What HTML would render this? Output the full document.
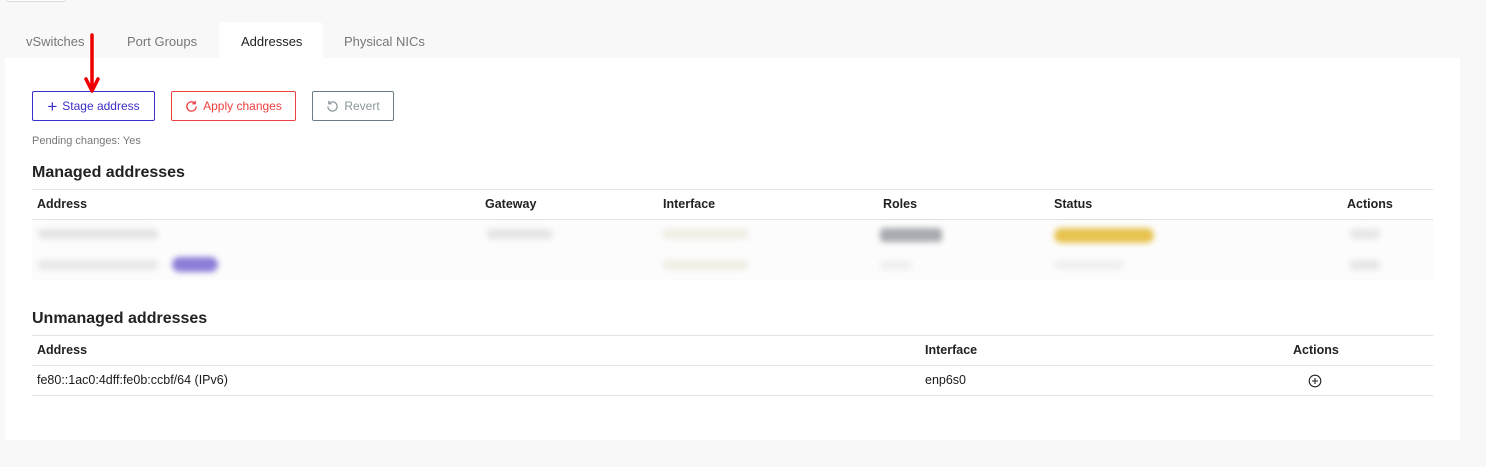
<!DOCTYPE html>
<html><head><style>
*{margin:0;padding:0;box-sizing:border-box}
body{width:1486px;height:467px;background:#f8f8f8;font-family:"Liberation Sans",sans-serif;position:relative;overflow:hidden;color:#1a1a1a}
.a{position:absolute;white-space:nowrap}
.tab{font-size:13px;color:#777;top:34px}
.card{left:5px;top:58px;width:1455px;height:382px;background:#fff}
.btn{height:30px;top:91px;border:1px solid;border-radius:2px;font-size:12px;display:flex;align-items:center;justify-content:center;gap:5px;background:#fff}
.h{font-size:16px;font-weight:bold;color:#222}
.th{font-size:12.5px;font-weight:bold;color:#222}
.line{height:1px;background:#e2e2e2}
.blur{filter:blur(3px);border-radius:4px}
</style></head><body>
<div class="a" style="left:6px;top:-4px;width:60px;height:6px;border:1px solid #ddd;border-radius:4px;background:#fff"></div>
<div class="a" style="left:219px;top:22px;width:104px;height:40px;background:#fff;border-radius:4px 4px 0 0"></div>
<div class="a tab" style="left:26px">vSwitches</div>
<div class="a tab" style="left:127px">Port Groups</div>
<div class="a tab" style="left:241px;color:#222">Addresses</div>
<div class="a tab" style="left:344px">Physical NICs</div>
<div class="a card"></div>

<div class="a btn" style="left:32px;width:123px;border-color:#3b2fc9;color:#3b2fc9"><span style="font-size:17px;line-height:1">+</span>Stage address</div>
<div class="a btn" style="left:171px;width:125px;border-color:#ef4040;color:#ef4040"><svg width="13" height="13" viewBox="0 0 14 14" fill="none" stroke="#ef4040" stroke-width="1.4"><path d="M12 7a5 5 0 1 1-1.5-3.6"/><path d="M11 1v3h-3"/></svg>Apply changes</div>
<div class="a btn" style="left:312px;width:82px;border-color:#6a7d84;color:#8a969a"><svg width="13" height="13" viewBox="0 0 14 14" fill="none" stroke="#8a969a" stroke-width="1.3"><path d="M2 7a5 5 0 1 0 1.5-3.6"/><path d="M3 1v3h3"/></svg>Revert</div>
<svg class="a" style="left:84px;top:33px" width="16" height="62" viewBox="0 0 16 62"><path d="M8 2V54" stroke="#e00" stroke-width="3.5" stroke-linecap="round"/><path d="M2 46L8 58L14 46" stroke="#e00" stroke-width="3.5" fill="none" stroke-linecap="round" stroke-linejoin="round"/></svg>
<div class="a" style="left:32px;top:135px;font-size:11px;color:#777">Pending changes: Yes</div>

<div class="a h" style="left:32px;top:164px">Managed addresses</div>
<div class="a line" style="left:32px;top:189px;width:1401px"></div>
<div class="a th" style="left:37px;top:197px">Address</div>
<div class="a th" style="left:485px;top:197px">Gateway</div>
<div class="a th" style="left:663px;top:197px">Interface</div>
<div class="a th" style="left:883px;top:197px">Roles</div>
<div class="a th" style="left:1054px;top:197px">Status</div>
<div class="a th" style="left:1347px;top:197px">Actions</div>
<div class="a line" style="left:32px;top:219px;width:1401px"></div>
<div class="a" style="left:32px;top:220px;width:1401px;height:60px;background:#fcfcfc"></div>
<div class="a blur" style="left:38px;top:229px;width:120px;height:10px;background:#e4e4e4"></div>
<div class="a blur" style="left:487px;top:229px;width:65px;height:10px;background:#e4e4e4"></div>
<div class="a blur" style="left:663px;top:229px;width:85px;height:10px;background:#f0ede4"></div>
<div class="a blur" style="left:880px;top:228px;width:62px;height:14px;background:#a8abb0"></div>
<div class="a blur" style="left:1054px;top:228px;width:100px;height:15px;background:#e8c350;border-radius:8px"></div>
<div class="a blur" style="left:1350px;top:229px;width:30px;height:10px;background:#e6e6e6"></div>
<div class="a blur" style="left:38px;top:260px;width:120px;height:10px;background:#e8e8e8"></div>
<div class="a blur" style="left:172px;top:257px;width:46px;height:15px;background:#8c7ed8;border-radius:8px"></div>
<div class="a blur" style="left:663px;top:260px;width:85px;height:10px;background:#f0ede4"></div>
<div class="a blur" style="left:880px;top:261px;width:32px;height:8px;background:#eee"></div>
<div class="a blur" style="left:1054px;top:261px;width:70px;height:8px;background:#eee"></div>
<div class="a blur" style="left:1350px;top:260px;width:30px;height:10px;background:#e6e6e6"></div>

<div class="a h" style="left:32px;top:310px">Unmanaged addresses</div>
<div class="a line" style="left:32px;top:335px;width:1401px"></div>
<div class="a th" style="left:37px;top:343px">Address</div>
<div class="a th" style="left:925px;top:343px">Interface</div>
<div class="a th" style="left:1293px;top:343px">Actions</div>
<div class="a line" style="left:32px;top:365px;width:1401px"></div>
<div class="a" style="left:37px;top:373px;font-size:12.5px">fe80::1ac0:4dff:fe0b:ccbf/64 (IPv6)</div>
<div class="a" style="left:925px;top:373px;font-size:12.5px">enp6s0</div>
<svg class="a" style="left:1308px;top:374px" width="14" height="14" viewBox="0 0 14 14" fill="none" stroke="#222" stroke-width="1.1"><circle cx="7" cy="7" r="5.8"/><path d="M7 4v6M4 7h6"/></svg>
<div class="a line" style="left:32px;top:395px;width:1401px"></div>
</body></html>
